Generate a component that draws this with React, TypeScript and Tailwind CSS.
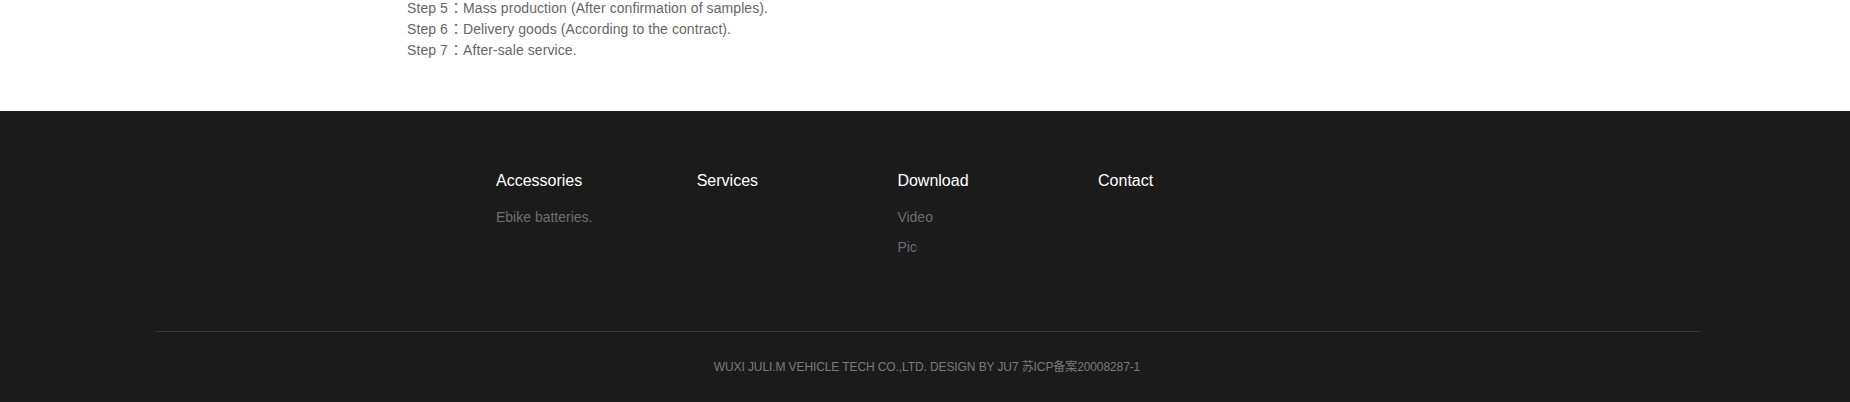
import React from "react";

const font = { fontFamily: '"Liberation Sans", Arial, "Noto Sans CJK SC", sans-serif' };

export default function App() {
  const cols = [
    { title: "Accessories", items: ["Ebike batteries."] },
    { title: "Services", items: [] as string[] },
    { title: "Download", items: ["Video", "Pic"] },
    { title: "Contact", items: [] as string[] },
  ];
  const colon = (
    <span
      className="pl-[1px]"
      style={{ fontFamily: '"Noto Sans CJK TC", sans-serif', lineHeight: 0 }}
    >
      ：
    </span>
  );
  return (
    <div className="w-[1850px] bg-white" style={font}>
      <div className="h-[111px] bg-white overflow-hidden">
        <div className="pl-[407px] -mt-[2px] text-[14px] leading-[21px] tracking-[0.08px] text-[#666666]">
          <p>Step 5{colon}Mass production (After confirmation of samples).</p>
          <p>Step 6{colon}Delivery goods (According to the contract).</p>
          <p>Step 7{colon}After-sale service.</p>
        </div>
      </div>
      <footer className="bg-[#1c1b1c] h-[291px] flex flex-col">
        <div className="pl-[496px] pt-[58px] flex h-[220px]">
          {cols.map((c) => (
            <div key={c.title} className="w-[200.7px] flex flex-col">
              <h3 className="text-[16px] leading-[24px] text-white">{c.title}</h3>
              <ul className="mt-[9px] flex flex-col">
                {c.items.map((it) => (
                  <li key={it} className="text-[14px] leading-[30px] text-[#6e6e6e]">
                    {it}
                  </li>
                ))}
              </ul>
            </div>
          ))}
        </div>
        <div className="ml-[156px] mr-[150px] border-t border-[#38373a]" />
        <div className="pt-[25px] pl-[4px] text-center text-[12px] leading-[20px] tracking-[-0.1px] text-[#7a7a7a]">
          WUXI JULI.M VEHICLE TECH CO.,LTD. DESIGN BY JU7 苏ICP备案20008287-1
        </div>
      </footer>
    </div>
  );
}
